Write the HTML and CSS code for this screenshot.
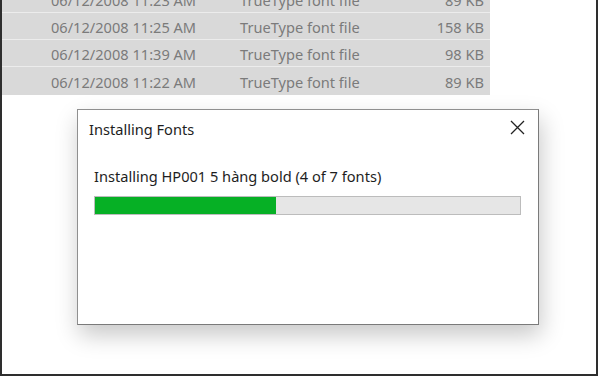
FILE: index.html
```html
<!DOCTYPE html>
<html>
<head>
<meta charset="utf-8">
<link rel="stylesheet" href="styles.css">
</head>
<body>
<div class="frame">
  <div class="list">
    <div class="row"><span class="date">06/12/2008 11:23 AM</span><span class="type">TrueType font file</span><span class="size">89 KB</span></div>
    <div class="row"><span class="date">06/12/2008 11:25 AM</span><span class="type">TrueType font file</span><span class="size">158 KB</span></div>
    <div class="row"><span class="date">06/12/2008 11:39 AM</span><span class="type">TrueType font file</span><span class="size">98 KB</span></div>
    <div class="row"><span class="date">06/12/2008 11:22 AM</span><span class="type">TrueType font file</span><span class="size">89 KB</span></div>
  </div>
  <div class="dialog">
    <div class="titlebar">
      <span class="title">Installing Fonts</span>
      <svg class="close" width="15" height="15" viewBox="0 0 15 15"><path d="M1 1L14 14M14 1L1 14" stroke="#222" stroke-width="1.3" fill="none"/></svg>
    </div>
    <div class="body">
      <div class="msg">Installing HP001 5 hàng bold (4 of 7 fonts)</div>
      <div class="track"><div class="fill" style="width:42.6%"></div></div>
    </div>
  </div>
</div>
</body>
</html>
```
FILE: styles.css
```css
html, body { margin: 0; padding: 0; background: #fff; }
body { font-family: "Noto Sans", "Open Sans", sans-serif; }
.frame {
  width: 594px;
  height: 374px;
  border-left: 2px solid #2e2e2e;
  border-right: 2px solid #2e2e2e;
  border-bottom: 2px solid #2e2e2e;
  overflow: hidden;
}
.list {
  width: 488px;
  background: #d9d9d9;
  margin-top: -14px;
  padding-bottom: 1px;
}
.row {
  height: 27px;
  box-sizing: border-box;
  padding-top: 2px;
  border-bottom: 1px solid #ececec;
  display: flex;
  align-items: center;
  color: #7b7b7b;
  font-size: 14.6px;
  white-space: nowrap;
}
.row:last-child { border-bottom: none; height: 27px; }
.date { margin-left: 49px; width: 189px; }
.type { flex: 1; }
.size { margin-right: 6px; }
.dialog {
  margin-left: 75px;
  margin-top: 14px;
  width: 460px;
  height: 214px;
  border: 1px solid #8f8f8f;
  border-right-color: #7a7a7a;
  border-bottom-color: #7a7a7a;
  background: #fff;
  box-shadow: 2px 10px 22px rgba(0,0,0,0.22);
}
.titlebar {
  height: 38px;
  display: flex;
  align-items: center;
  justify-content: space-between;
  padding: 0 13px 0 11px;
}
.title { font-size: 14.6px; color: #1e1e1e; }
.close { margin-top: -3px; }
.body { padding: 18px 16px 0 16px; }
.msg { font-size: 14.6px; color: #1e1e1e; height: 20px; line-height: 20px; }
.track {
  margin-top: 10px;
  width: 425px;
  height: 17px;
  background: #e6e6e6;
  border: 1px solid #bcbcbc;
}
.fill { height: 100%; background: #06b025; }
```
